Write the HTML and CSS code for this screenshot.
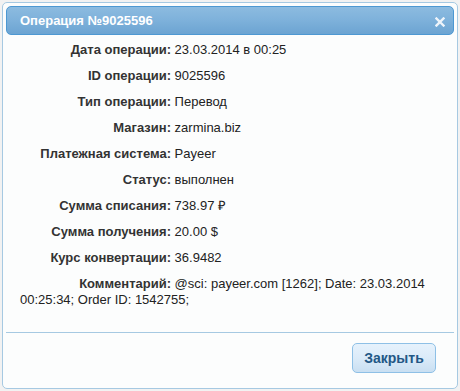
FILE: index.html
```html
<!DOCTYPE html>
<html lang="ru">
<head>
    <meta charset="UTF-8">
    <link rel="stylesheet" href="styles.css">
    <title>Операция №9025596</title>
</head>
<body>
    <div class="dialog">
        <div class="titlebar">
            <span class="title">Операция №9025596</span>
            <span class="close">
                <svg width="10" height="10" viewBox="0 0 10 10">
                    <path d="M1.5 1.5 L8.5 8.5 M8.5 1.5 L1.5 8.5" stroke="#eef4fa" stroke-width="2.4" stroke-linecap="square"/>
                </svg>
            </span>
        </div>
        <div class="content">
            <p><span class="label">Дата операции:</span> 23.03.2014 в 00:25</p>
            <p><span class="label">ID операции:</span> 9025596</p>
            <p><span class="label">Тип операции:</span> Перевод</p>
            <p><span class="label">Магазин:</span> zarmina.biz</p>
            <p><span class="label">Платежная система:</span> Payeer</p>
            <p><span class="label">Статус:</span> выполнен</p>
            <p><span class="label">Сумма списания:</span> 738.97 &#8381;</p>
            <p><span class="label">Сумма получения:</span> 20.00 $</p>
            <p><span class="label">Курс конвертации:</span> 36.9482</p>
            <p><span class="label">Комментарий:</span> @sci: payeer.com [1262]; Date: 23.03.2014 00:25:34; Order ID: 1542755;</p>
        </div>
        <div class="buttonpane">
            <button class="button">Закрыть</button>
        </div>
    </div>
</body>
</html>
```

FILE: styles.css
```css
body {
    margin: 0;
    padding: 2px 2px 0 2px;
    background: #f2f2f2;
    font-family: Arial, "Liberation Sans", sans-serif;
}

.dialog {
    width: 448px;
    height: 379px;
    padding: 3px;
    border: 1px solid #a6c9e2;
    border-radius: 5px;
    background: #fcfdfd;
    display: flex;
    flex-direction: column;
}

.titlebar {
    height: 27px;
    flex-shrink: 0;
    border: 1px solid #4d98d2;
    border-radius: 5px;
    background: linear-gradient(to bottom, #8cbbe0 0%, #7fb2db 45%, #6ca4d2 100%);
    display: flex;
    align-items: center;
    justify-content: space-between;
    padding: 0 8px 0 13px;
}

.title {
    color: #fff;
    font-weight: bold;
    font-size: 13px;
}

.close {
    display: flex;
    margin-top: 2px;
}

.content {
    flex: 1;
    padding: 7px 14px 0 14px;
    font-size: 13px;
    color: #222;
}

.content p {
    margin: 0 0 10px 0;
    line-height: 16px;
}

.label {
    display: inline-block;
    vertical-align: top;
    width: 151px;
    text-align: right;
    font-weight: bold;
    color: #333;
}

.buttonpane {
    height: 42px;
    flex-shrink: 0;
    border-top: 1px solid #a6c9e2;
    display: flex;
    justify-content: flex-end;
    align-items: flex-start;
    padding: 10px 18px 0 0;
}

.button {
    width: 84px;
    height: 30px;
    border: 1px solid #8ec0e6;
    border-radius: 5px;
    background: linear-gradient(to bottom, #e6f2fc 0%, #dbebf9 50%, #c9dff2 100%);
    color: #235886;
    font-family: Arial, "Liberation Sans", sans-serif;
    font-size: 14px;
    font-weight: bold;
    padding: 0;
}
```
